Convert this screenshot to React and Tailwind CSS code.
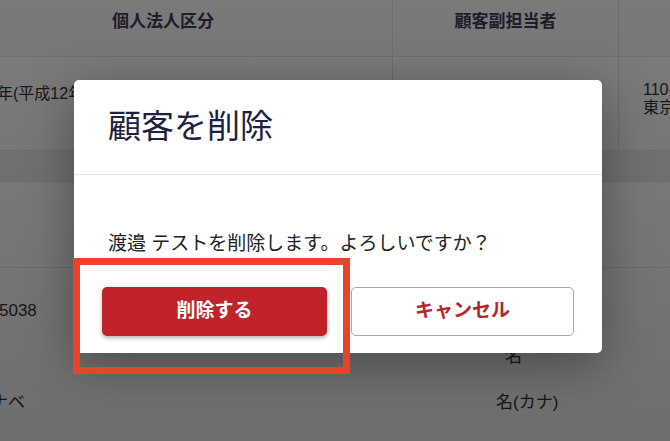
const font = { fontFamily: '"Liberation Sans", "Noto Sans CJK JP", sans-serif' };

function Background() {
  return (
    <div className="w-[670px] h-[441px] overflow-hidden bg-white text-[#333]" style={font}>
      {/* header row */}
      <div className="grid grid-cols-[392px_226px_52px] h-[57px] bg-[#f4f4f4] border-b border-[#e4e4e4]">
        <div className="pl-[112px] pt-[9px] text-[17px] font-bold text-[#3a3c55]">個人法人区分</div>
        <div className="border-l border-[#e0e0e0] pt-[9px] text-center text-[17px] font-bold text-[#3a3c55]">顧客副担当者</div>
        <div className="border-l border-[#e0e0e0]"></div>
      </div>
      {/* row 1 */}
      <div className="grid grid-cols-[392px_226px_52px] h-[94px] bg-[#fafafa] border-b border-[#e4e4e4] text-[16px]">
        <div className="pt-[25px] -ml-[3px] whitespace-nowrap">年(平成12年)</div>
        <div className="border-l border-[#e0e0e0]"></div>
        <div className="border-l border-[#e0e0e0] pl-[24px] pt-[24px] leading-[18px] whitespace-nowrap">
          <div>110-</div>
          <div>東京</div>
        </div>
      </div>
      <div className="h-[31px] bg-[#ececec] border-b border-[#e0e0e0]"></div>
      <div className="h-[86px] border-b border-[#e8e8e8]"></div>
      {/* detail rows */}
      <div className="pt-[20px] text-[17px]">
        <div className="flex h-[46px] items-center">
          <div className="-ml-[1px]">5038</div>
        </div>
        <div className="flex h-[46px] items-center pl-[505px]">名</div>
        <div className="flex h-[46px] items-center">
          <div className="w-[505px] -ml-[9px]">ナベ</div>
          <div>名(カナ)</div>
        </div>
      </div>
    </div>
  );
}

function App() {
  return (
    <div className="relative w-[670px] h-[441px] overflow-hidden">
      <Background />
      {/* overlay */}
      <div className="absolute inset-0 bg-[linear-gradient(to_bottom,rgba(0,0,0,0.5),rgba(0,0,0,0.57))] pl-[74px] pt-[80px]" style={font}>
        <div className="w-[528px] h-[273px] bg-white rounded-[5px] shadow-[0_12px_50px_rgba(0,0,0,0.35)] flex flex-col">
          <div className="px-[34px] pt-[27px] pb-[27px] border-b border-[#e6e6e6]">
            <h2 className="text-[33px] leading-[40px] text-[#1e2140]">顧客を削除</h2>
          </div>
          <div className="px-[28px] pt-[56px]">
            <p className="pl-[6px] text-[19px] leading-[26px] text-[#222]">渡邉 テストを削除します。よろしいですか？</p>
            <div className="flex gap-[24px] mt-[30px]">
              <button className="w-[225px] h-[49px] rounded-[5px] bg-[#c0242a] text-white text-[19px] font-bold shadow-[0_2px_4px_rgba(0,0,0,0.3)]">
                削除する
              </button>
              <button className="w-[223px] h-[49px] rounded-[5px] border border-[#b3a5a8] bg-white text-[#b3262c] text-[19px] font-bold">
                キャンセル
              </button>
            </div>
          </div>
        </div>
      </div>
      {/* highlight annotation */}
      <div className="absolute left-[73px] top-[258px] w-[277px] h-[116px] border-[7px] border-[#e8442a]"></div>
    </div>
  );
}

export default App;
